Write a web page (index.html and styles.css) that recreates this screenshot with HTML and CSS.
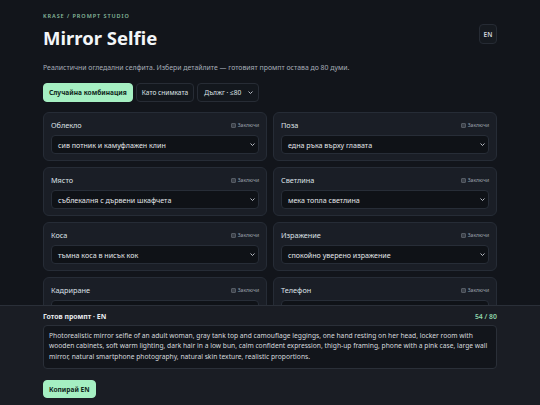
FILE: index.html
```html
<!DOCTYPE html>
<html lang="bg">
<head>
<meta charset="utf-8">
<title>Mirror Selfie</title>
<link rel="stylesheet" href="styles.css">
</head>
<body>
<div class="scroll">
<main class="page">
  <header class="head">
    <div class="head-text">
      <div class="kicker">KRASE / PROMPT STUDIO</div>
      <h1 class="title">Mirror Selfie</h1>
    </div>
    <button class="lang">EN</button>
  </header>
  <p class="sub">Реалистични огледални селфита. Избери детайлите — готовият промпт остава до 80 думи.</p>
  <div class="actions">
    <button class="btn btn-primary">Случайна комбинация</button>
    <button class="btn">Като снимката</button>
    <div class="btn btn-select">Дължг · ≤80 <svg class="chev" viewBox="0 0 10 6" width="5" height="3"><path d="M1 1l4 4 4-4" fill="none" stroke="currentColor" stroke-width="1.8"/></svg></div>
  </div>

  <section class="grid">
    <div class="card">
      <div class="card-head"><span class="label">Облекло</span><span class="lock"><span class="box"></span>Заключи</span></div>
      <div class="select"><span>сив потник и камуфлажен клин</span><svg class="chev" viewBox="0 0 10 6" width="5" height="3"><path d="M1 1l4 4 4-4" fill="none" stroke="currentColor" stroke-width="1.8"/></svg></div>
    </div>
    <div class="card">
      <div class="card-head"><span class="label">Поза</span><span class="lock"><span class="box"></span>Заключи</span></div>
      <div class="select"><span>една ръка върху главата</span><svg class="chev" viewBox="0 0 10 6" width="5" height="3"><path d="M1 1l4 4 4-4" fill="none" stroke="currentColor" stroke-width="1.8"/></svg></div>
    </div>
    <div class="card">
      <div class="card-head"><span class="label">Място</span><span class="lock"><span class="box"></span>Заключи</span></div>
      <div class="select"><span>съблекалня с дървени шкафчета</span><svg class="chev" viewBox="0 0 10 6" width="5" height="3"><path d="M1 1l4 4 4-4" fill="none" stroke="currentColor" stroke-width="1.8"/></svg></div>
    </div>
    <div class="card">
      <div class="card-head"><span class="label">Светлина</span><span class="lock"><span class="box"></span>Заключи</span></div>
      <div class="select"><span>мека топла светлина</span><svg class="chev" viewBox="0 0 10 6" width="5" height="3"><path d="M1 1l4 4 4-4" fill="none" stroke="currentColor" stroke-width="1.8"/></svg></div>
    </div>
    <div class="card">
      <div class="card-head"><span class="label">Коса</span><span class="lock"><span class="box"></span>Заключи</span></div>
      <div class="select"><span>тъмна коса в нисък кок</span><svg class="chev" viewBox="0 0 10 6" width="5" height="3"><path d="M1 1l4 4 4-4" fill="none" stroke="currentColor" stroke-width="1.8"/></svg></div>
    </div>
    <div class="card">
      <div class="card-head"><span class="label">Изражение</span><span class="lock"><span class="box"></span>Заключи</span></div>
      <div class="select"><span>спокойно уверено изражение</span><svg class="chev" viewBox="0 0 10 6" width="5" height="3"><path d="M1 1l4 4 4-4" fill="none" stroke="currentColor" stroke-width="1.8"/></svg></div>
    </div>
    <div class="card">
      <div class="card-head"><span class="label">Кадриране</span><span class="lock"><span class="box"></span>Заключи</span></div>
      <div class="select"><span>кадър до бедрата</span><svg class="chev" viewBox="0 0 10 6" width="5" height="3"><path d="M1 1l4 4 4-4" fill="none" stroke="currentColor" stroke-width="1.8"/></svg></div>
    </div>
    <div class="card">
      <div class="card-head"><span class="label">Телефон</span><span class="lock"><span class="box"></span>Заключи</span></div>
      <div class="select"><span>телефон с розов калъф</span><svg class="chev" viewBox="0 0 10 6" width="5" height="3"><path d="M1 1l4 4 4-4" fill="none" stroke="currentColor" stroke-width="1.8"/></svg></div>
    </div>
  </section>
</main>
</div>

<footer class="panel">
  <div class="panel-inner">
    <div class="panel-head"><span class="panel-title">Готов промпт · EN</span><span class="count">54 / 80</span></div>
    <div class="output">Photorealistic mirror selfie of an adult woman, gray tank top and camouflage leggings, one hand resting on her head, locker room with wooden cabinets, soft warm lighting, dark hair in a low bun, calm confident expression, thigh-up framing, phone with a pink case, large wall mirror, natural smartphone photography, natural skin texture, realistic proportions.</div>
    <button class="btn btn-primary btn-copy">Копирай EN</button>
  </div>
</footer>
</body>
</html>
```
FILE: styles.css
```css
* { box-sizing: border-box; }
html, body { margin: 0; padding: 0; }
body {
  background: #12151b;
  color: #e6e9ee;
  font-family: "Noto Sans", "Open Sans", sans-serif;
  width: 540px;
  height: 405px;
  overflow: hidden;
  display: flex;
  flex-direction: column;
}
.scroll {
  height: 305px;
  flex: none;
  overflow: hidden;
}
.page {
  width: 454px;
  margin: 0 auto;
  padding-top: 12px;
}
.head {
  display: flex;
  justify-content: space-between;
  align-items: flex-start;
}
.kicker {
  font-size: 5.5px;
  line-height: 8px;
  letter-spacing: 0.95px;
  color: #86b89c;
  font-weight: 600;
}
.title {
  margin: 6px 0 0;
  font-size: 18.5px;
  line-height: 24px;
  font-weight: 700;
  color: #f3f5f8;
}
.lang {
  margin-top: 12px;
  width: 18px;
  height: 20px;
  padding: 0;
  border: 1px solid #262b34;
  border-radius: 4px;
  background: #161a20;
  color: #d0d4da;
  font-family: inherit;
  font-size: 6.5px;
  font-weight: 600;
}
.sub {
  margin: 13px 0 0;
  font-size: 6.9px;
  line-height: 10px;
  color: #a6adb8;
}
.actions {
  display: flex;
  gap: 3px;
  margin-top: 10px;
}
.btn {
  height: 19px;
  padding: 0 5px;
  border: 1px solid #272c35;
  border-radius: 4px;
  background: #13171d;
  color: #dfe3e8;
  font-family: inherit;
  font-size: 6.6px;
  display: inline-flex;
  align-items: center;
  gap: 6px;
}
.btn-primary {
  background: #a5efc2;
  border-color: #a5efc2;
  color: #10261a;
  font-weight: 700;
}
.btn-select { padding: 0 5px 0 6px; gap: 7px; }
.chev { color: #c9ced6; flex: none; }
.grid {
  margin-top: 10px;
  display: grid;
  grid-template-columns: 1fr 1fr;
  column-gap: 6px;
  row-gap: 6px;
}
.card {
  background: #1a1e26;
  border: 1px solid #262c36;
  border-radius: 6px;
  padding: 6px 7px 6px;
  height: 49px;
}
.card-head {
  display: flex;
  justify-content: space-between;
  align-items: center;
  height: 12px;
}
.label {
  font-size: 7.3px;
  color: #dde1e6;
}
.lock {
  display: flex;
  align-items: center;
  gap: 2px;
  font-size: 5px;
  color: #9aa1ab;
}
.box {
  width: 5px;
  height: 5px;
  border-radius: 1px;
  background: #3b4048;
  border: 0.5px solid #555b64;
}
.select {
  margin-top: 4px;
  height: 19px;
  background: #0f1217;
  border: 1px solid #272d37;
  border-radius: 4px;
  display: flex;
  align-items: center;
  justify-content: space-between;
  padding: 0 3px 0 6px;
  font-size: 7.1px;
  color: #e3e6ea;
}
.panel {
  flex: none;
  height: 100px;
  background: #1a1d24;
  border-top: 1px solid #2a2f38;
}
.panel-inner {
  width: 454px;
  margin: 0 auto;
  padding-top: 4px;
}
.panel-head {
  display: flex;
  justify-content: space-between;
  align-items: center;
  height: 12px;
}
.panel-title {
  font-size: 6.9px;
  font-weight: 700;
  color: #e9ecf0;
}
.count {
  font-size: 6.9px;
  font-weight: 600;
  color: #8fd6aa;
}
.output {
  margin-top: 3px;
  height: 44px;
  background: #12151b;
  border: 1px solid #2a2f38;
  border-radius: 4px;
  padding: 5px 5px;
  font-size: 6.7px;
  line-height: 10.3px;
  color: #d6dade;
}
.btn-copy {
  margin-top: 11px;
  height: 18px;
  padding: 0 5px;
}
```
